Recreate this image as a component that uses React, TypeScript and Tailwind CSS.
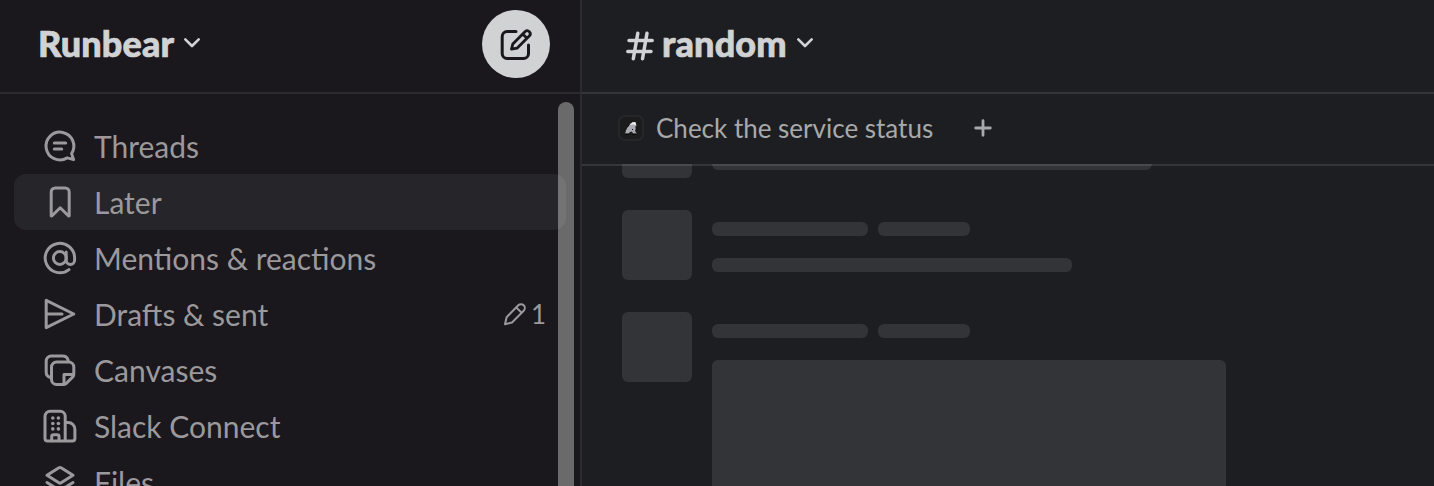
import type { ReactNode } from "react";

function Icon({ children, size = 40, className = "" }: { children: ReactNode; size?: number; className?: string }) {
  return (
    <svg
      width={size}
      height={size}
      viewBox={`0 0 ${size} ${size}`}
      fill="none"
      stroke="currentColor"
      strokeWidth={3}
      strokeLinecap="round"
      strokeLinejoin="round"
      className={`shrink-0 ${className}`}
    >
      {children}
    </svg>
  );
}

const Threads = () => (
  <Icon>
    <path d="M31.6 27.6A13.9 13.9 0 1 0 27.2 31.9L33.6 33.6Z" />
    <path d="M14.3 17h11.4M14.3 23h7.4" />
  </Icon>
);
const Later = () => (
  <Icon>
    <path d="M11.2 33.8V10a4 4 0 0 1 4-4h10a4 4 0 0 1 4 4v23.8l-.6.2-8.4-8.200-8.400 8.200z" />
  </Icon>
);
const Mentions = () => (
  <Icon>
    <circle cx="19.8" cy="20" r="6.4" />
    <path d="M26.2 14v8.200a4.200 4.200 0 0 0 8.400 0V20a14.700 14.700 0 1 0-5.600 11.600" />
  </Icon>
);
const Drafts = () => (
  <Icon>
    <path d="M6.2 6.3 33.8 20 6.2 33.7zM7 20h15" />
  </Icon>
);
const Canvases = () => (
  <Icon>
    <path d="M16.5 12h12.3a5 5 0 0 1 5 5v7.500c0 1-.3 1.700-1 2.400l-6.500 6.500c-.7.7-1.400 1-2.400 1h-7.400a5 5 0 0 1-5-5V17a5 5 0 0 1 5-5Z" />
    <path d="M24 34V24.500h9.500M10.500 27.500C7.500 26.800 6.200 24.800 6.200 22.300V11a5 5 0 0 1 5-5h11.600c2.700 0 4.500 1.500 5.400 4.300" />
  </Icon>
);
const Connect = () => (
  <Icon>
    <g transform="translate(.2 .3)">
      <path d="M25 34.800H7.300a2.500 2.500 0 0 1-2.500-2.500V10a5 5 0 0 1 5-5H20a5 5 0 0 1 5 5zM25 16.200h3a6.700 6.700 0 0 1 6.700 6.700v9.400a2.500 2.500 0 0 1-2.500 2.500H25" />
      <path d="M11.500 34.500v-4.300a1.800 1.800 0 0 1 1.800-1.800H17a1.800 1.800 0 0 1 1.800 1.800v4.300" />
      <g fill="currentColor" stroke="none">
        <circle cx="12.600" cy="11.700" r="1.800" />
        <circle cx="18.200" cy="11.700" r="1.800" />
        <circle cx="12.600" cy="17.200" r="1.800" />
        <circle cx="18.200" cy="17.200" r="1.800" />
        <circle cx="12.600" cy="22.600" r="1.800" />
        <circle cx="18.200" cy="22.600" r="1.800" />
      </g>
    </g>
  </Icon>
);
const Files = () => (
  <Icon>
    <path d="M18.900 5.800a2 2 0 0 1 2.200 0L33 13.300 21.100 20.800a2 2 0 0 1-2.200 0L7 13.300zM7 20.500l11.900 7.400a2 2 0 0 0 2.200 0L33 20.500M7 27.500l11.900 7.400a2 2 0 0 0 2.200 0L33 27.500" />
  </Icon>
);

function Chevron() {
  return (
    <svg width="18" height="12" viewBox="0 0 18 12" fill="none" stroke="currentColor" strokeWidth="2.6" strokeLinecap="round" strokeLinejoin="round" className="-mt-[2px]">
      <path d="M2.300 2.300 9 9l6.700-6.700" />
    </svg>
  );
}

const items: { label: string; icon: ReactNode; active?: boolean; drafts?: number }[] = [
  { label: "Threads", icon: <Threads /> },
  { label: "Later", icon: <Later />, active: true },
  { label: "Mentions & reactions", icon: <Mentions /> },
  { label: "Drafts & sent", icon: <Drafts />, drafts: 1 },
  { label: "Canvases", icon: <Canvases /> },
  { label: "Slack Connect", icon: <Connect /> },
  { label: "Files", icon: <Files /> },
];

function Sidebar() {
  return (
    <aside className="relative flex w-[582px] shrink-0 flex-col border-r-2 border-[#2c2b30] bg-[#1a171d]">
      <header className="flex h-[94px] shrink-0 items-start justify-between border-b-2 border-[#2c2a2f] pt-[10px] pr-[30px] pl-[38px] text-[#d1d2d3]">
        <div className="flex h-[68px] items-center gap-[9px]">
          <h1 className="-mt-[2px] text-[36px] leading-[44px] font-black tracking-[0.12px] [-webkit-text-stroke:0.7px_#d1d2d3]">Runbear</h1>
          <Chevron />
        </div>
        <button className="flex size-[68px] items-center justify-center rounded-full bg-[#d1d2d3] text-[#1a171d]">
          <Icon>
            <path d="M20 7.500h-8.800a5 5 0 0 0-5 5v17a5 5 0 0 0 5 5h16.300a5 5 0 0 0 5-5V21" />
            <path d="M15.500 25.200l1.300-5.200L29.200 7.500a3.050 3.050 0 0 1 4.300 4.300L21 24.200zM26.700 10l4.300 4.300" strokeWidth="2.800" />
          </Icon>
        </button>
      </header>
      <nav className="flex min-h-0 flex-1 flex-col overflow-hidden pt-6 pr-[14px] pl-[14px]">
        {items.map((it) => (
          <a
            key={it.label}
            className={`flex h-14 shrink-0 items-center gap-[14px] rounded-xl pr-5 pl-[26px] text-[#9b999c] ${it.active ? "bg-[#26252a]" : ""}`}
          >
            {it.icon}
            <span className="flex-1 text-[30px] leading-9">{it.label}</span>
            {it.drafts && (
              <span className="flex items-center gap-1">
                <svg width="24" height="24" viewBox="0 0 24 24" fill="none" stroke="currentColor" strokeWidth="2" strokeLinejoin="round" className="-mt-px">
                  <path d="M2 22.200l1.600-7L15.300 3.300a3.800 3.800 0 0 1 5.400 5.400L9 20.500zM13.200 5.400l5.400 5.400" />
                </svg>
                <span className="text-[26px] leading-8">{it.drafts}</span>
              </span>
            )}
          </a>
        ))}
      </nav>
      <div className="absolute top-[102px] right-[6px] h-[500px] w-4 rounded-full bg-[#fcfff8]/36" />
    </aside>
  );
}

const Bone = ({ className }: { className: string }) => <div className={`bg-[#333437] ${className}`} />;

function Message({ children }: { children: ReactNode }) {
  return (
    <div className="flex h-[102px] shrink-0 gap-5">
      <Bone className="size-[70px] rounded-md" />
      <div className="flex flex-col pt-3">
        <div className="flex gap-[10px]">
          <Bone className="h-[14px] w-[156px] rounded-md" />
          <Bone className="h-[14px] w-[92px] rounded-md" />
        </div>
        <div className="pt-[22px]">{children}</div>
      </div>
    </div>
  );
}

function Channel() {
  return (
    <main className="flex min-w-0 flex-1 flex-col bg-[#1d1e21]">
      <header className="flex h-[94px] shrink-0 items-start border-b-2 border-[#35363a] pt-[10px] pl-11 text-[#d1d2d3]">
        <div className="flex h-[68px] items-center">
          <svg width="28" height="30" viewBox="0 0 28 30" fill="none" stroke="currentColor" strokeWidth="3.500" strokeLinecap="round" className="mt-[3px]">
            <path d="M11.800 2.200 7.300 27.800M21 2.200 16.500 27.800M3 9.400h23.200M1.800 20.600H25" />
          </svg>
          <h2 className="-mt-[2px] mr-[9px] ml-2 text-[36px] leading-[44px] font-black tracking-[0.15px] [-webkit-text-stroke:0.7px_#d1d2d3]">random</h2>
          <Chevron />
        </div>
      </header>
      <div className="flex h-[70px] shrink-0 items-center pb-[2px] pl-9 text-[#a8a9ab]">
        <div className="flex size-[26px] items-center justify-center rounded-[7px] border-2 border-[#252629] bg-[#1c1c1c]">
          <svg width="14" height="14" viewBox="0 0 14 14" className="shrink-0">
            <path d="m1 12.500 1-2.500-.5-1.500L4 6l2-3 3-2h2.500l1 3.500L11 6l1.500 1.500L11 9l.5 2 1.500 1.500H9L8 10.500l-2 .5-1.500 1.500z" fill="#aaaab2" />
            <path d="m5.500 3.700 3.200-2.400h2.600l.9 2.900-3-.7z" fill="#eeeeee" />
            <path d="M1 8.700 3 7.500M1 13.300h4M8.500 13.300h4M11.700 7.500l1.500.5M3.700 5.500l1.500-2M8 8l1 1" stroke="#050505" />
          </svg>
        </div>
        <span className="ml-3 text-[26px] leading-8">Check the service status</span>
        <svg width="18" height="18" viewBox="0 0 18 18" stroke="currentColor" strokeWidth="2.800" strokeLinecap="round" className="ml-[41px]">
          <path d="M9 1.700v14.600M1.700 9h14.600" />
        </svg>
      </div>
      <section className="relative flex min-h-0 flex-1 flex-col overflow-hidden">
        <div className="-mt-14 flex flex-col pl-10">
          <Message>
            <Bone className="h-[14px] w-[440px] rounded-md" />
          </Message>
          <Message>
            <Bone className="h-[14px] w-[360px] rounded-md" />
          </Message>
          <Message>
            <Bone className="h-[300px] w-[514px] rounded-md" />
          </Message>
        </div>
        <div className="absolute inset-x-0 top-0 h-[2px] bg-[#e8e8ea]/12" />
      </section>
    </main>
  );
}

export default function App() {
  return (
    <div className="flex h-[486px] w-[1434px] overflow-hidden font-[Lato,sans-serif]">
      <Sidebar />
      <Channel />
    </div>
  );
}
